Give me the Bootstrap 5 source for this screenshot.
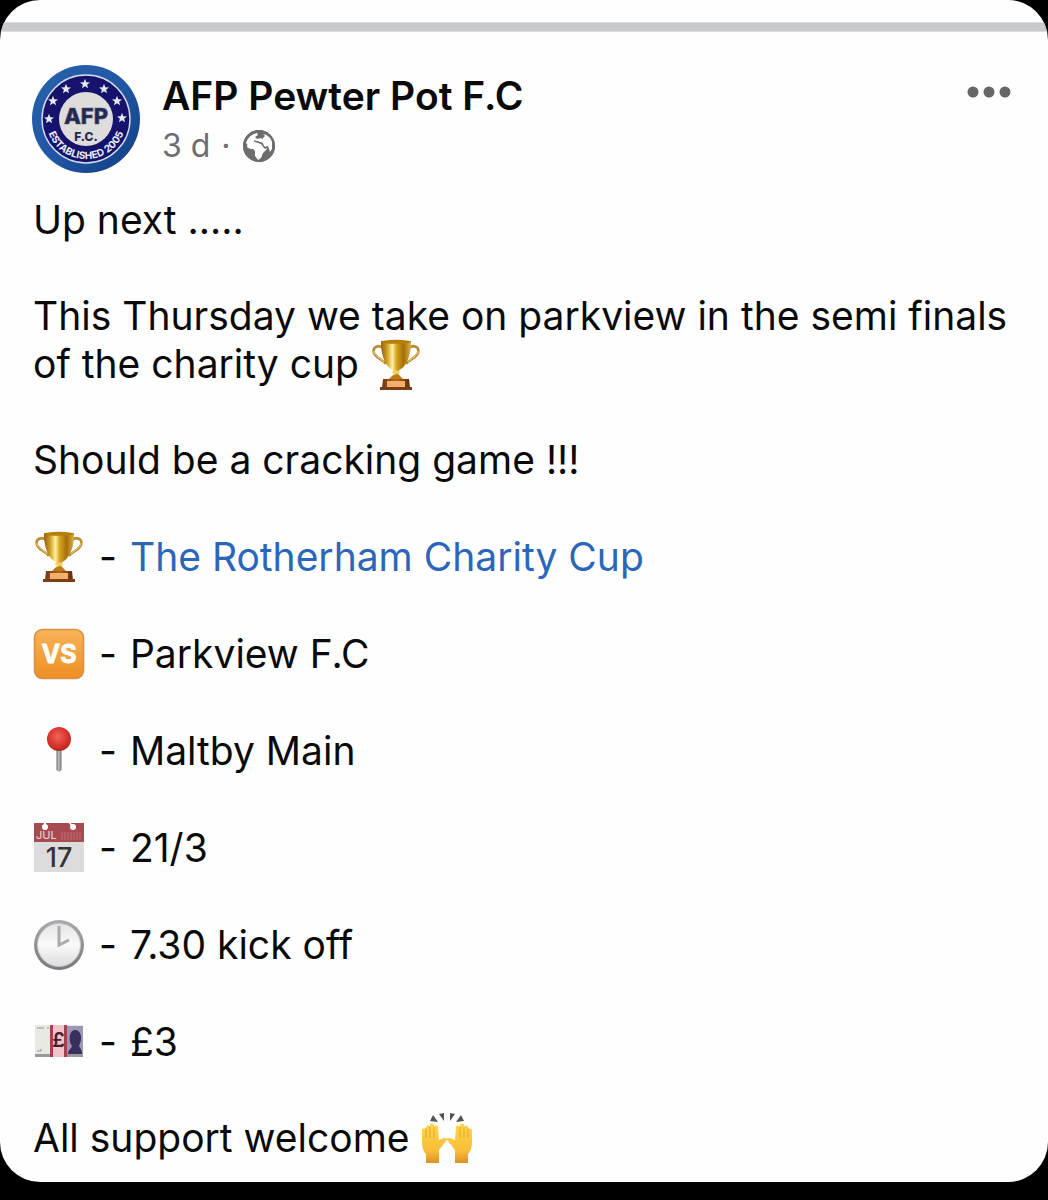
<!DOCTYPE html>
<html lang="en">
<head>
<meta charset="utf-8">
<meta name="viewport" content="width=device-width, initial-scale=1">
<title>AFP Pewter Pot F.C</title>
<link href="https://cdn.jsdelivr.net/npm/bootstrap@5.3.0/dist/css/bootstrap.min.css" rel="stylesheet">
<style>
  body { background: #000; color: #0a0a0a; font-family: Inter, "Liberation Sans", sans-serif; }
  .post { background: #fefefe; border-radius: 40px; padding: 22px 0 20px; overflow: hidden; }
  .post-rule { height: 10px; background: #c9cacc; border-top: 1px solid #dddddf; border-bottom: 1px solid #dddddf; }
  .post-head { padding: 33px 36px 0 32px; gap: 22px; }
  .crest { width: 108px; height: 108px; flex: none; }
  .author { font-size: 39px; line-height: 48px; font-weight: 600; margin-top: 7px; }
  .meta { font-size: 32px; line-height: 48px; color: #6c6d70; gap: 11px; margin-top: 2px; }
  .globe { width: 34px; height: 34px; }
  .more { width: 46px; height: 14px; margin-top: 20px; }
  .post-body { padding: 23px 33px 0; font-size: 39px; line-height: 48px; }
  .post-body p, .post-body li { margin-bottom: 48px; }
  .post-body li { min-height: 49px; }
  .post-body p:last-child { margin-bottom: 0; }
  .facts li { gap: 14px; }
  .facts .dash { margin-right: -1px; }
  .emoji { width: 52px; height: 52px; flex: none; margin: -3px 0; }
  p .emoji { vertical-align: -10px; }
  .tag { color: #2b66bb; }
</style>
<script src="https://cdn.jsdelivr.net/npm/bootstrap@5.3.0/dist/js/bootstrap.bundle.min.js"></script>
</head>
<body>
<svg width="0" height="0" class="position-absolute" aria-hidden="true">
  <defs>
    <linearGradient id="gold" x1="0" x2="1"><stop offset="0" stop-color="#8f6108"/><stop offset=".2" stop-color="#d19c22"/><stop offset=".38" stop-color="#fff0a0"/><stop offset=".52" stop-color="#d6a31f"/><stop offset=".75" stop-color="#a56f08"/><stop offset="1" stop-color="#d9b04d"/></linearGradient>
    <linearGradient id="wood" x1="0" x2="1"><stop offset="0" stop-color="#6e3a12"/><stop offset=".5" stop-color="#b4652a"/><stop offset="1" stop-color="#5d2b0c"/></linearGradient>
    <symbol id="trophy" viewBox="0 0 52 52">
      <g fill="none" stroke="#b98c35" stroke-width="2.6"><path d="M13 9C9 5 2 8 4 14c2 5 8 6 12 11M39 9c4-4 11-1 9 5-2 5-8 6-12 11"/></g>
      <path d="M4 12c0 5 7 7 10 11M48 12c0 5-7 7-10 11" fill="none" stroke="#f1d68b" stroke-width="1"/>
      <path d="M11 2h30c0 13-3 23-10 28-2 1-3 2-3 4l4 7H20l4-7c0-2-1-3-3-4C14 25 11 15 11 2z" fill="url(#gold)"/>
      <ellipse cx="26" cy="2.800" rx="15" ry="2" fill="#b57d0b"/>
      <ellipse cx="26" cy="33" rx="4" ry="1.600" fill="#f4d268"/>
      <path d="M21 38c2-3 8-3 10 0l4 4H17z" fill="#b97b12"/>
      <path d="M13 40h26l1 9H12z" fill="url(#wood)"/><path d="M10 48h32v3H10z" fill="#793e16"/>
      <path d="M17 42h18v6H17z" fill="#f2b068"/>
    </symbol>
  </defs>
</svg>

<main class="container-fluid p-0">
  <article class="post">
    <div class="post-rule"></div>
    <header class="post-head d-flex align-items-start">
      <svg class="crest" viewBox="0 0 108 108" role="img" aria-label="AFP F.C. crest">
        <defs>
          <linearGradient id="cloth" x2="1" y2="1"><stop stop-color="#2a62ad"/><stop offset=".5" stop-color="#2157a4"/><stop offset="1" stop-color="#123d84"/></linearGradient>
          <path id="arc" d="M15.500 65A40 40 0 0 0 92.500 65"/>
          <path id="star" d="M0-5.200 1.300-1.700 5-1.600 2.100.7 3.100 4.300 0 2.200-3.100 4.300-2.100.7-5-1.600-1.300-1.700z"/>
        </defs>
        <circle cx="54" cy="54" r="54" fill="url(#cloth)"/>
        <circle cx="54" cy="54" r="44" fill="#15136b" stroke="#d5dbe9" stroke-width="1.400"/>
        <circle cx="54" cy="54" r="27" fill="#dedddb"/>
        <g fill="#e6e9f0"><use href="#star" x="53" y="19"/><use href="#star" x="34" y="24"/><use href="#star" x="72" y="24"/><use href="#star" x="21" y="36"/><use href="#star" x="85" y="36"/><use href="#star" x="17" y="54"/><use href="#star" x="90" y="53"/></g>
        <g font-family="Inter, sans-serif" font-weight="800" text-anchor="middle">
          <text x="54" y="59" font-size="22" fill="#25284f" stroke="#4d5280" stroke-width=".6">AFP</text>
          <text x="54" y="76" font-size="12" fill="#25284f">F.C.</text>
        </g>
        <text font-family="Inter, sans-serif" font-weight="700" text-anchor="middle" font-size="10" fill="#eceef5"><textPath href="#arc" startOffset="50%">ESTABLISHED 2005</textPath></text>
      </svg>
      <div class="flex-grow-1">
        <h1 class="author mb-0">AFP Pewter Pot F.C</h1>
        <div class="meta d-flex align-items-center">
          <span>3 d</span><span>·</span>
          <svg class="globe" viewBox="0 0 34 34" role="img" aria-label="Public">
            <circle cx="17" cy="17" r="16" fill="#6c6d70"/>
            <path d="M4 14C6 8 10 5 15 4l1 2-3 2 2 2 4-1 3 2-1 3-6-2-5 1-3 4z" fill="#fefefe"/>
            <path d="M5 17c1-4 4-5 8-5l6 3 4 1 2 4-4 4-2 5-3 2-3-4v-5l-2-2H9c-2-1-4-1-4-3z" fill="#fefefe"/>
            <path d="M21 5c5 1 8 4 9 8v7l-2 3-2-6-3 1-3-5 1-4 2-2z" fill="#fefefe"/>
            <path d="M12 12l7 2 4 5 2-1" fill="none" stroke="#6c6d70" stroke-width="1.400"/>
            <circle cx="17" cy="17" r="15" fill="none" stroke="#6c6d70" stroke-width="2"/>
          </svg>
        </div>
      </div>
      <button type="button" class="more btn p-0 border-0 d-flex" aria-label="More options">
        <svg width="46" height="14" viewBox="0 0 46 14" fill="#656668"><circle cx="7" cy="7" r="5.500"/><circle cx="23" cy="7" r="5.500"/><circle cx="39" cy="7" r="5.500"/></svg>
      </button>
    </header>

    <div class="post-body">
      <p>Up next .....</p>
      <p>This Thursday we take on parkview in the semi finals of the charity cup <svg class="emoji" role="img" aria-label="Trophy"><use href="#trophy"/></svg></p>
      <p>Should be a cracking game !!!</p>
      <ul class="facts list-unstyled mb-0">
        <li class="d-flex align-items-center">
          <svg class="emoji" role="img" aria-label="Trophy"><use href="#trophy"/></svg>
          <span class="dash">-</span><a class="tag text-decoration-none" href="#">The Rotherham Charity Cup</a>
        </li>
        <li class="d-flex align-items-center">
          <svg class="emoji" viewBox="0 0 52 52" role="img" aria-label="Versus">
            <linearGradient id="amber" x2="0" y2="1"><stop stop-color="#f8b458"/><stop offset="1" stop-color="#ee8e24"/></linearGradient>
            <rect x="1.500" y="1.500" width="49" height="49" rx="8" fill="url(#amber)" stroke="#d99243" stroke-width="1.600"/>
            <text x="26" y="35" text-anchor="middle" font-family="Inter, sans-serif" font-size="25" font-weight="700" fill="#fff" stroke="#fff" stroke-width=".8">VS</text>
          </svg>
          <span class="dash">-</span><span>Parkview F.C</span>
        </li>
        <li class="d-flex align-items-center">
          <svg class="emoji" viewBox="0 0 52 52" role="img" aria-label="Pin">
            <radialGradient id="red" cx=".45" cy=".4" r=".6"><stop stop-color="#f0665a"/><stop offset=".6" stop-color="#dc3831"/><stop offset="1" stop-color="#b72620"/></radialGradient>
            <linearGradient id="steel"><stop stop-color="#666"/><stop offset=".4" stop-color="#bbb"/><stop offset="1" stop-color="#777"/></linearGradient>
            <path d="M23.500 24h5v21l-2.500 2-2.500-2z" fill="url(#steel)"/><circle cx="26" cy="14" r="12" fill="url(#red)"/>
          </svg>
          <span class="dash">-</span><span>Maltby Main</span>
        </li>
        <li class="d-flex align-items-center">
          <svg class="emoji" viewBox="0 0 52 52" role="img" aria-label="Calendar">
            <path d="M1 20h50v30H1z" fill="#dcdcdd"/><path d="M1 1h50v19H1z" fill="#a84b50"/>
            <g fill="#fff"><circle cx="12" cy="5" r="3"/><path d="M11 0h2v5h-2z"/><circle cx="40" cy="5" r="3"/><path d="M35 0h2l4 5h-2z"/></g>
            <g stroke="#bd7074" stroke-width="1"><path d="M29 10v8M32 10v8M35 10v8M38 10v8M41 10v8M44 10v8M47 10v8"/></g>
            <text x="3" y="17" font-family="Inter, sans-serif" font-size="11" fill="#f2d8d8">JUL</text>
            <text x="26" y="45" text-anchor="middle" font-family="Inter, sans-serif" font-size="27" font-weight="500" fill="#333">17</text>
          </svg>
          <span class="dash">-</span><span>21/3</span>
        </li>
        <li class="d-flex align-items-center">
          <svg class="emoji" viewBox="0 0 52 52" role="img" aria-label="Two o'clock">
            <linearGradient id="rim" x2="0" y2="1"><stop stop-color="#a9aaac"/><stop offset="1" stop-color="#77787a"/></linearGradient>
            <linearGradient id="dial" x2="0" y2="1"><stop stop-color="#e4e4e6"/><stop offset=".5" stop-color="#fafafa"/><stop offset="1" stop-color="#dcdcdf"/></linearGradient>
            <circle cx="26" cy="26" r="25" fill="url(#rim)"/><circle cx="26" cy="26" r="21.500" fill="url(#dial)" stroke="#c8c9cb"/>
            <path d="M26 7v19l10-5" fill="none" stroke="#a9aaac" stroke-width="3"/>
          </svg>
          <span class="dash">-</span><span>7.30 kick off</span>
        </li>
        <li class="d-flex align-items-center">
          <svg class="emoji" viewBox="0 0 52 52" role="img" aria-label="Pound banknotes">
            <path d="M2 10h48v31H2z" fill="#98979a"/><path d="M2 9h48v29H2z" fill="#e9e9e4"/>
            <path d="M33 10h17v28H33z" fill="#9c98b3"/><path d="M35 38c0-4 3-5 4-8-4-5-3-16 3-16s8 8 4 16c1 2 3 4 3 8z" fill="#35305c"/>
            <path d="M17 9h17v32H17z" fill="#edc5ca"/><path d="M17 9h3v32h-3zM31 9h3v32h-3z" fill="#a6404f"/>
            <path d="M4 12h7M14 12h2M4 35h4v-2" fill="none" stroke="#8e9490"/>
            <text x="25.500" y="31" text-anchor="middle" font-family="Inter, sans-serif" font-size="20" font-weight="600" fill="#4c1c26">£</text>
          </svg>
          <span class="dash">-</span><span>£3</span>
        </li>
      </ul>
      <p>All support welcome <svg class="emoji" viewBox="0 0 52 52" role="img" aria-label="Raised hands">
        <defs>
          <linearGradient id="skin" x2="0" y2="1"><stop stop-color="#ffd64f"/><stop offset=".7" stop-color="#f8bd35"/><stop offset="1" stop-color="#d99222"/></linearGradient>
          <path id="hand" d="M5 50V41C1 37 1 32 1 26v-9c0-2 4-2 4 0v-3c0-2 4-2 4 0v-2c0-2 4-2 4 0v2c0-2 4-2 4 0l1 13 5-2c3 0 4 1 2 3l-7 9v13z" fill="url(#skin)"/>
        </defs>
        <use href="#hand"/><use href="#hand" transform="translate(52 0) scale(-1 1)"/>
        <path d="M5 15v10M9 14v11M13 14v11M47 15v10M43 14v11M39 14v11" stroke="#e6a52c" fill="none"/>
        <path d="M9 8l3-6 5 7zM18 1l5-1v8zM29 0l5 1-5 7zM40 2l3 6-8 1z" fill="#545454"/>
      </svg></p>
    </div>
  </article>
</main>
</body>
</html>
